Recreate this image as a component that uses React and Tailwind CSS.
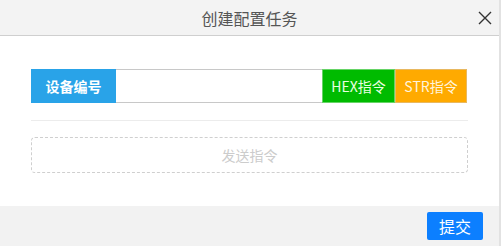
import { useState } from 'react';

export default function App() {
  const [device, setDevice] = useState('');

  return (
    <div
      className="w-[501px] h-[246px] flex bg-white overflow-hidden"
      style={{ fontFamily: '"Noto Sans CJK SC", "Liberation Sans", sans-serif' }}
    >
      <div className="flex-1 flex flex-col">
        {/* header */}
        <div className="relative h-[36px] bg-[#f3f3f3] border-b border-[#cfcfcf] flex items-center justify-center">
          <span className="text-[16px] leading-none text-[#555]">创建配置任务</span>
          <button className="absolute right-[7px] top-[11px] w-[14px] h-[14px] text-[#333]">
            <svg viewBox="0 0 14 14" className="w-[14px] h-[14px]" fill="none" stroke="currentColor" strokeWidth="1.4">
              <path d="M1 1 L13 13 M13 1 L1 13" />
            </svg>
          </button>
        </div>

        {/* body */}
        <div className="flex-1 px-[31px] pt-[33px]">
          <div className="flex h-[34px] w-[436px]">
            <div className="w-[85px] bg-[#29a3e8] border border-[#29a3e8] flex items-center justify-center text-white font-bold text-[14px] leading-none">
              设备编号
            </div>
            <input
              value={device}
              onChange={(e) => setDevice(e.target.value)}
              className="flex-1 min-w-0 border-y border-[#c8c8c8] outline-none px-2 text-[14px]"
            />
            <button className="w-[73px] bg-[#00bb00] border border-[#66d466] text-[#e8ffe0] text-[14px] leading-none">
              HEX指令
            </button>
            <button className="w-[72px] bg-[#ffaa00] border border-[#e8b860] text-[#fff4dc] text-[14px] leading-none">
              STR指令
            </button>
          </div>

          <div className="mt-[17px] h-px bg-[#ececec]" />

          <div className="mt-[16px] h-[36px] border border-dashed border-[#cfcfcf] rounded-[4px] flex items-center justify-center text-[14px] leading-none text-[#cccccc]">
            发送指令
          </div>
        </div>

        {/* footer */}
        <div className="h-[40px] bg-[#f2f2f2] flex items-center justify-end pr-[16px]">
          <button className="w-[56px] h-[28px] rounded-[2px] bg-[#0c7fff] text-white text-[16px] leading-none">
            提交
          </button>
        </div>
      </div>
      <div className="w-[2px] bg-[#e2e2e2]" />
    </div>
  );
}
